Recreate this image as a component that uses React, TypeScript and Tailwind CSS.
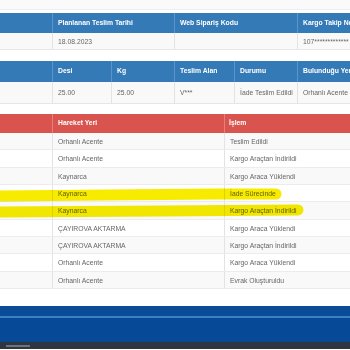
const font = { fontFamily: '"Liberation Sans", Arial, sans-serif' };

const hareketler: [string, string][] = [
  ['Orhanlı Acente', 'Teslim Edildi'],
  ['Orhanlı Acente', 'Kargo Araçtan İndirildi'],
  ['Kaynarca', 'Kargo Araca Yüklendi'],
  ['Kaynarca', 'İade Sürecinde'],
  ['Kaynarca', 'Kargo Araçtan İndirildi'],
  ['ÇAYIROVA AKTARMA', 'Kargo Araca Yüklendi'],
  ['ÇAYIROVA AKTARMA', 'Kargo Araçtan İndirildi'],
  ['Orhanlı Acente', 'Kargo Araca Yüklendi'],
  ['Orhanlı Acente', 'Evrak Oluşturuldu'],
];

function Th({ children, last }: { children?: React.ReactNode; last?: boolean }) {
  return (
    <div className={`flex items-center pl-[5px] font-bold text-white whitespace-nowrap overflow-hidden ${last ? '' : 'border-r border-[#5b95cc]'}`}>
      {children}
    </div>
  );
}

function Td({ children, last }: { children?: React.ReactNode; last?: boolean }) {
  return (
    <div className={`flex items-center pl-[5px] pt-[2px] text-[#666] whitespace-nowrap overflow-hidden ${last ? '' : 'border-r border-[#e3e3e3]'}`}>
      {children}
    </div>
  );
}

export default function App() {
  return (
    <div className="relative w-[350px] h-[350px] overflow-hidden bg-white text-[6.8px]" style={font}>
      {/* bottom of previous table */}
      <div className="h-[10px] bg-[#fafafa] border-b border-[#eee]" />
      <div className="h-[3px]" />

      {/* table 1 */}
      <div className="grid grid-cols-[53px_122px_123px_120px] h-[20px] bg-[#337ab7]">
        <Th />
        <Th>Planlanan Teslim Tarihi</Th>
        <Th>Web Sipariş Kodu</Th>
        <Th last>Kargo Takip No</Th>
      </div>
      <div className="grid grid-cols-[53px_122px_123px_120px] h-[17px] bg-[#f9f9f9] border-b border-[#e6e6e6]">
        <Td />
        <Td>18.08.2023</Td>
        <Td />
        <Td last>107*************</Td>
      </div>

      <div className="h-[11px]" />

      {/* table 2 */}
      <div className="grid grid-cols-[53px_59px_63px_60px_63px_120px] h-[21px] bg-[#337ab7]">
        <Th />
        <Th>Desi</Th>
        <Th>Kg</Th>
        <Th>Teslim Alan</Th>
        <Th>Durumu</Th>
        <Th last>Bulunduğu Yer</Th>
      </div>
      <div className="grid grid-cols-[53px_59px_63px_60px_63px_120px] h-[22px] bg-[#f9f9f9] border-b border-[#e6e6e6]">
        <Td />
        <Td>25.00</Td>
        <Td>25.00</Td>
        <Td>V***</Td>
        <Td>İade Teslim Edildi</Td>
        <Td last>Orhanlı Acente</Td>
      </div>

      <div className="h-[10px]" />

      {/* table 3 */}
      <div className="grid grid-cols-[53px_172px_125px] h-[19px] bg-[#d9534f]">
        <div className="border-r border-[#e47f7c]" />
        <div className="flex items-center pl-[5px] font-bold text-white border-r border-[#e47f7c]">Hareket Yeri</div>
        <div className="flex items-center pl-[4px] font-bold text-white">İşlem</div>
      </div>
      {hareketler.map(([yer, islem], i) => (
        <div
          key={i}
          className={`grid grid-cols-[53px_172px_125px] h-[17.33px] border-b border-[#ececec] ${i % 2 === 0 ? 'bg-[#f9f9f9]' : 'bg-white'}`}
        >
          <Td />
          <Td>{yer}</Td>
          <Td last>{islem}</Td>
        </div>
      ))}

      <div className="h-[17px]" />

      {/* footer */}
      <div className="h-[10px] bg-[#0a4c98]" />
      <div className="h-[2px] bg-[#3f7fc4]" />
      <div className="h-[24px] bg-[#064996]" />
      <div className="flex h-[7px] bg-[#2f3640]">
        <div className="ml-[6px] mt-[3px] w-[24px] h-[2px] bg-[#6b7380]" />
      </div>

      {/* highlighter strokes */}
      <svg className="absolute left-0 top-0 pointer-events-none mix-blend-multiply" width="350" height="350" viewBox="0 0 350 350">
        <path d="M-5 196 C 80 195, 180 194, 276 194" stroke="#f7ec00" strokeWidth="11" strokeLinecap="round" fill="none" />
        <path d="M-5 212 C 90 211, 200 211, 298 210" stroke="#f7ec00" strokeWidth="11" strokeLinecap="round" fill="none" />
      </svg>
    </div>
  );
}
